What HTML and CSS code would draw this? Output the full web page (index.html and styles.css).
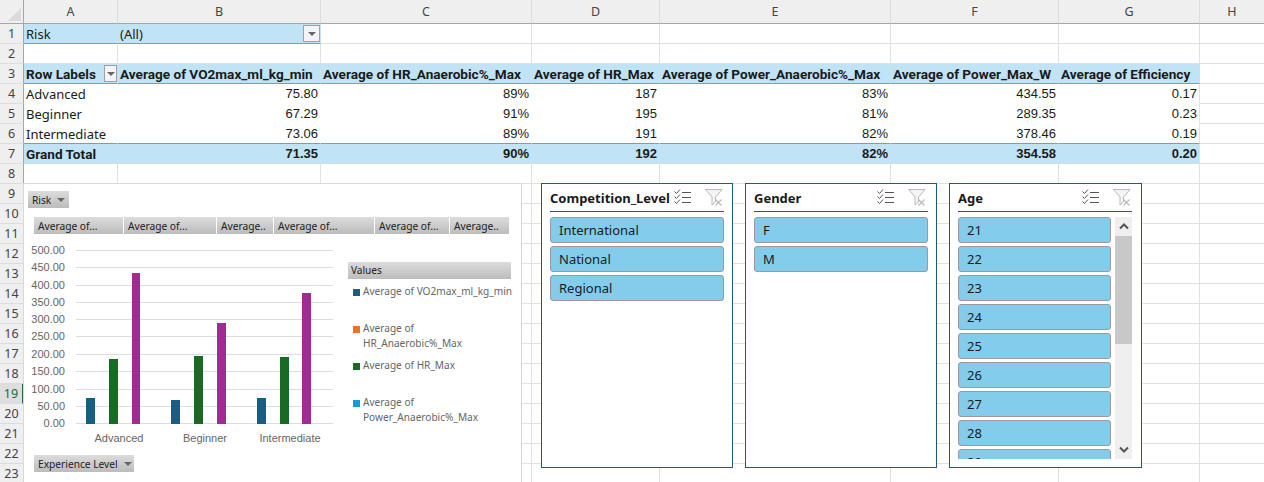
FILE: index.html
```html
<!DOCTYPE html>
<html lang="en">
<head>
    <meta charset="UTF-8">
    <meta name="viewport" content="width=device-width, initial-scale=1.0">
    <title>Pivot Dashboard</title>
    <link rel="stylesheet" href="styles.css">
</head>
<body>
    <svg class="icon-defs" width="0" height="0">
        <symbol id="icon-multi" viewBox="0 0 18 16">
            <path d="M.5 2.5l2 2 3.5-4M.5 7.5l2 2 3.5-4M.5 12.5l2 2 3.5-4" fill="none" stroke="#555" stroke-width="1"/>
            <path d="M8 3.5h9M8 8.5h9M8 13.5h9" fill="none" stroke="#555" stroke-width="1"/>
        </symbol>
        <symbol id="icon-clear" viewBox="0 0 18 17">
            <path d="M.5.5h16.5l-6.5 7.5v5l-3.5 3v-8z" fill="#f4f4f4" stroke="#b9b9b9" stroke-width="1"/>
            <path d="M10.5 10.5l6 6M16.5 10.5l-6 6" fill="none" stroke="#b9b9b9" stroke-width="1.2"/>
        </symbol>
        <symbol id="icon-drop" viewBox="0 0 8 4">
            <path d="M0 0h8l-4 4z" fill="#666"/>
        </symbol>
    </svg>

    <div class="sheet">
        <table class="grid">
            <colgroup>
                <col class="col-head"><col class="col-a"><col class="col-b"><col class="col-c"><col class="col-d"><col class="col-e"><col class="col-f"><col class="col-g"><col class="col-h">
            </colgroup>
            <thead>
                <tr class="col-labels">
                    <th class="corner"><span class="corner-mark"></span></th>
                    <th>A</th><th>B</th><th>C</th><th>D</th><th>E</th><th>F</th><th>G</th><th>H</th>
                </tr>
            </thead>
            <tbody>
                <tr class="filter-row">
                    <th>1</th>
                    <td class="band">Risk</td>
                    <td class="band filter-value">(All)<span class="drop-btn"><svg width="8" height="4"><use href="#icon-drop"/></svg></span></td>
                    <td></td><td></td><td></td><td></td><td></td><td></td>
                </tr>
                <tr><th>2</th><td></td><td></td><td></td><td></td><td></td><td></td><td></td><td></td></tr>
                <tr class="pivot-head">
                    <th>3</th>
                    <td class="band labels-cell">Row Labels<span class="drop-btn"><svg width="8" height="4"><use href="#icon-drop"/></svg></span></td>
                    <td class="band">Average of VO2max_ml_kg_min</td>
                    <td class="band">Average of HR_Anaerobic%_Max</td>
                    <td class="band">Average of HR_Max</td>
                    <td class="band">Average of Power_Anaerobic%_Max</td>
                    <td class="band">Average of Power_Max_W</td>
                    <td class="band">Average of Efficiency</td>
                    <td></td>
                </tr>
                <tr class="pivot-row">
                    <th>4</th>
                    <td>Advanced</td><td class="num">75.80</td><td class="num">89%</td><td class="num">187</td><td class="num">83%</td><td class="num">434.55</td><td class="num">0.17</td><td class="plain"></td>
                </tr>
                <tr class="pivot-row">
                    <th>5</th>
                    <td>Beginner</td><td class="num">67.29</td><td class="num">91%</td><td class="num">195</td><td class="num">81%</td><td class="num">289.35</td><td class="num">0.23</td><td class="plain"></td>
                </tr>
                <tr class="pivot-row last-row">
                    <th>6</th>
                    <td>Intermediate</td><td class="num">73.06</td><td class="num">89%</td><td class="num">191</td><td class="num">82%</td><td class="num">378.46</td><td class="num">0.19</td><td class="plain"></td>
                </tr>
                <tr class="pivot-total">
                    <th>7</th>
                    <td class="band">Grand Total</td><td class="band num">71.35</td><td class="band num">90%</td><td class="band num">192</td><td class="band num">82%</td><td class="band num">354.58</td><td class="band num">0.20</td><td></td>
                </tr>
                <tr><th>8</th><td></td><td></td><td></td><td></td><td></td><td></td><td></td><td></td></tr>
                <tr><th>9</th><td></td><td></td><td></td><td></td><td></td><td></td><td></td><td></td></tr>
                <tr><th>10</th><td></td><td></td><td></td><td></td><td></td><td></td><td></td><td></td></tr>
                <tr><th>11</th><td></td><td></td><td></td><td></td><td></td><td></td><td></td><td></td></tr>
                <tr><th>12</th><td></td><td></td><td></td><td></td><td></td><td></td><td></td><td></td></tr>
                <tr><th>13</th><td></td><td></td><td></td><td></td><td></td><td></td><td></td><td></td></tr>
                <tr><th>14</th><td></td><td></td><td></td><td></td><td></td><td></td><td></td><td></td></tr>
                <tr><th>15</th><td></td><td></td><td></td><td></td><td></td><td></td><td></td><td></td></tr>
                <tr><th>16</th><td></td><td></td><td></td><td></td><td></td><td></td><td></td><td></td></tr>
                <tr><th>17</th><td></td><td></td><td></td><td></td><td></td><td></td><td></td><td></td></tr>
                <tr><th>18</th><td></td><td></td><td></td><td></td><td></td><td></td><td></td><td></td></tr>
                <tr><th class="active-row">19</th><td></td><td></td><td></td><td></td><td></td><td></td><td></td><td></td></tr>
                <tr><th>20</th><td></td><td></td><td></td><td></td><td></td><td></td><td></td><td></td></tr>
                <tr><th>21</th><td></td><td></td><td></td><td></td><td></td><td></td><td></td><td></td></tr>
                <tr><th>22</th><td></td><td></td><td></td><td></td><td></td><td></td><td></td><td></td></tr>
                <tr><th>23</th><td></td><td></td><td></td><td></td><td></td><td></td><td></td><td></td></tr>
            </tbody>
        </table>

        <!-- pivot chart floats over the cells -->
        <div class="chart">
            <div class="chart-top">
                <span class="field-btn risk-btn">Risk<svg width="8" height="4"><use href="#icon-drop"/></svg></span>
            </div>
            <div class="value-btns">
                <span class="field-btn w-89">Average of...</span>
                <span class="field-btn w-92">Average of...</span>
                <span class="field-btn w-56">Average..</span>
                <span class="field-btn w-100">Average of...</span>
                <span class="field-btn w-74">Average of...</span>
                <span class="field-btn w-59">Average..</span>
            </div>
            <div class="chart-body">
                <svg class="plot" width="324" height="210" viewBox="0 0 324 210">
                    <g class="gridlines">
                        <path d="M52 16.5h257M52 33.5h257M52 51.5h257M52 68.5h257M52 85.5h257M52 102.5h257M52 120.5h257M52 137.5h257M52 155.5h257M52 172.5h257M52 189.5h257"/>
                    </g>
                    <g class="axis-y" text-anchor="end">
                        <text x="41" y="20">500.00</text>
                        <text x="41" y="37">450.00</text>
                        <text x="41" y="55">400.00</text>
                        <text x="41" y="72">350.00</text>
                        <text x="41" y="89">300.00</text>
                        <text x="41" y="106">250.00</text>
                        <text x="41" y="124">200.00</text>
                        <text x="41" y="141">150.00</text>
                        <text x="41" y="159">100.00</text>
                        <text x="41" y="176">50.00</text>
                        <text x="41" y="193">0.00</text>
                    </g>
                    <g class="bars-vo2">
                        <rect x="62" y="164" width="9" height="26"/>
                        <rect x="147" y="166" width="9" height="24"/>
                        <rect x="233" y="164" width="9" height="26"/>
                    </g>
                    <g class="bars-hr">
                        <rect x="85" y="125" width="9" height="65"/>
                        <rect x="170" y="122" width="9" height="68"/>
                        <rect x="256" y="123" width="9" height="67"/>
                    </g>
                    <g class="bars-power">
                        <rect x="108" y="39" width="8" height="151"/>
                        <rect x="193" y="89" width="9" height="101"/>
                        <rect x="278" y="59" width="9" height="131"/>
                    </g>
                    <g class="axis-x" text-anchor="middle">
                        <text x="95" y="208">Advanced</text>
                        <text x="181" y="208">Beginner</text>
                        <text x="266" y="208">Intermediate</text>
                    </g>
                </svg>
                <div class="legend">
                    <div class="legend-title">Values</div>
                    <div class="legend-item legend-single"><span class="swatch sw-vo2"></span><span>Average of VO2max_ml_kg_min</span></div>
                    <div class="legend-item"><span class="swatch sw-anaer"></span><span>Average of<br>HR_Anaerobic%_Max</span></div>
                    <div class="legend-item"><span class="swatch sw-hr"></span><span>Average of HR_Max</span></div>
                    <div class="legend-item"><span class="swatch sw-pow"></span><span>Average of<br>Power_Anaerobic%_Max</span></div>
                </div>
            </div>
            <div class="chart-bottom">
                <span class="field-btn level-btn">Experience Level<svg width="8" height="4"><use href="#icon-drop"/></svg></span>
            </div>
        </div>

        <div class="slicer slicer-comp">
            <div class="slicer-head">
                <span class="slicer-title">Competition_Level</span>
                <div class="slicer-tools">
                    <svg width="18" height="16"><use href="#icon-multi"/></svg>
                    <svg width="18" height="17"><use href="#icon-clear"/></svg>
                </div>
            </div>
            <div class="slicer-items">
                <div class="slicer-item">International</div>
                <div class="slicer-item">National</div>
                <div class="slicer-item">Regional</div>
            </div>
        </div>

        <div class="slicer slicer-gender">
            <div class="slicer-head">
                <span class="slicer-title">Gender</span>
                <div class="slicer-tools">
                    <svg width="18" height="16"><use href="#icon-multi"/></svg>
                    <svg width="18" height="17"><use href="#icon-clear"/></svg>
                </div>
            </div>
            <div class="slicer-items">
                <div class="slicer-item">F</div>
                <div class="slicer-item">M</div>
            </div>
        </div>

        <div class="slicer slicer-age">
            <div class="slicer-head">
                <span class="slicer-title">Age</span>
                <div class="slicer-tools">
                    <svg width="18" height="16"><use href="#icon-multi"/></svg>
                    <svg width="18" height="17"><use href="#icon-clear"/></svg>
                </div>
            </div>
            <div class="slicer-scroll">
                <div class="slicer-items">
                    <div class="slicer-item">21</div>
                    <div class="slicer-item">22</div>
                    <div class="slicer-item">23</div>
                    <div class="slicer-item">24</div>
                    <div class="slicer-item">25</div>
                    <div class="slicer-item">26</div>
                    <div class="slicer-item">27</div>
                    <div class="slicer-item">28</div>
                    <div class="slicer-item">29</div>
                </div>
                <div class="scrollbar">
                    <svg class="chev" width="10" height="7" viewBox="0 0 10 7"><path d="M1 5.5l4-4 4 4" fill="none" stroke="#555" stroke-width="2"/></svg>
                    <div class="scroll-thumb"></div>
                    <svg class="chev chev-down" width="10" height="7" viewBox="0 0 10 7"><path d="M1 1.5l4 4 4-4" fill="none" stroke="#555" stroke-width="2"/></svg>
                </div>
            </div>
        </div>
    </div>
</body>
</html>
```

FILE: styles.css
```css
html, body {
    margin: 0;
    padding: 0;
    height: 100%;
    overflow: hidden;
    background-color: white;
}

body {
    font-family: "Noto Sans", Arial, sans-serif;
    font-size: 13px;
    color: #1a1a1a;
}

.icon-defs {
    position: absolute;
}

.sheet {
    position: relative;
    width: 1264px;
    height: 482px;
    overflow: hidden;
}

/* cell grid */
.grid {
    table-layout: fixed;
    width: 1264px;
    border-collapse: separate;
    border-spacing: 0;
}

.col-head { width: 24px; }
.col-a { width: 94px; }
.col-b { width: 203px; }
.col-c { width: 211px; }
.col-d { width: 128px; }
.col-e { width: 231px; }
.col-f { width: 168px; }
.col-g { width: 141px; }
.col-h { width: 65px; }

.grid th, .grid td {
    box-sizing: border-box;
    height: 20px;
    padding: 0 2px;
    border-right: 1px solid #e1e1e1;
    border-bottom: 1px solid #e1e1e1;
    white-space: nowrap;
    overflow: hidden;
    font-weight: normal;
    text-align: left;
}

.grid tbody th {
    padding: 0;
    background-color: #efefef;
    border-right: 1px solid #a6a6a6;
    border-bottom-color: #dcdcdc;
    text-align: center;
    font-size: 12.5px;
    color: #444;
}

.grid tbody th.active-row {
    background-color: #dedede;
    border-right: 2px solid #1a6b3c;
    color: #1a6b3c;
}

.col-labels th {
    height: 24px;
    padding: 0;
    background-color: #efefef;
    border-right-color: #dcdcdc;
    border-bottom: 1px solid #a6a6a6;
    text-align: center;
    font-size: 12.5px;
    color: #444;
}

.col-labels th.corner {
    position: relative;
    border-right-color: #a6a6a6;
}

.corner-mark {
    position: absolute;
    right: 2px;
    bottom: 2px;
    width: 0;
    height: 0;
    border-left: 13px solid transparent;
    border-bottom: 13px solid #dadada;
}

/* pivot table */
.grid td.band {
    position: relative;
    background-color: #c0e4f5;
    border-right-color: #c0e4f5;
    border-bottom-color: #c0e4f5;
}

.filter-row td.band {
    border-bottom-color: #5aa9d0;
}

.pivot-head td.band {
    font-family: Roboto, Arial, sans-serif;
    font-size: 13.6px;
    font-weight: bold;
    border-bottom-color: #5aa9d0;
}

.pivot-total td.band {
    font-family: Roboto, Arial, sans-serif;
    font-size: 13.6px;
    font-weight: bold;
    border-bottom-color: #c0e4f5;
}

.pivot-total td.band:nth-child(8) {
    border-right-color: #e1e1e1;
}

.pivot-row td {
    border-right-color: transparent;
    border-bottom-color: transparent;
}

.pivot-row td.plain {
    border-bottom-color: #e1e1e1;
}

.pivot-row td:nth-child(8) {
    border-right-color: #e1e1e1;
}

.last-row td {
    border-bottom-color: #5aa9d0;
}

.last-row td.plain {
    border-bottom-color: #e1e1e1;
}

.grid td.num {
    font-family: "Liberation Sans", Arial, sans-serif;
    font-size: 13px;
    text-align: right;
}

.drop-btn {
    position: absolute;
    top: 1px;
    right: 0;
    box-sizing: border-box;
    display: flex;
    align-items: center;
    justify-content: center;
    width: 17px;
    height: 17px;
    border: 1px solid #a0a0a0;
    background-color: #f4f4f8;
}

.labels-cell .drop-btn {
    width: 13px;
}

/* chart */
.chart {
    position: absolute;
    left: 23px;
    top: 183px;
    box-sizing: border-box;
    width: 499px;
    height: 300px;
    background-color: white;
    border: 1px solid #d9d9d9;
}

.field-btn {
    box-sizing: border-box;
    display: inline-flex;
    align-items: center;
    gap: 6px;
    height: 17px;
    padding-left: 4px;
    background: linear-gradient(#dcdcdc, #bcbcbc);
    font-size: 10.2px;
    color: #222;
    white-space: nowrap;
    overflow: hidden;
}

.chart-top {
    display: flex;
    padding: 7px 0 0 4px;
}

.risk-btn {
    width: 41px;
}

.value-btns {
    display: flex;
    gap: 1px;
    margin: 9px 0 0 10px;
}

.w-89 { width: 89px; }
.w-92 { width: 92px; }
.w-56 { width: 56px; }
.w-100 { width: 100px; }
.w-74 { width: 74px; }
.w-59 { width: 59px; }

.chart-body {
    display: flex;
    height: 221px;
}

.plot {
    flex: none;
}

.plot text {
    font-family: "Liberation Sans", Arial, sans-serif;
    font-size: 11px;
    fill: #666;
}

.gridlines path {
    fill: none;
    stroke: #dcdcdc;
    stroke-width: 1;
}

.bars-vo2 rect { fill: #156082; }
.bars-hr rect { fill: #196b24; }
.bars-power rect { fill: #a02b93; }

.legend {
    margin: 28px 0 0 0;
    width: 163px;
    font-size: 10.1px;
    color: #666;
}

.legend-title {
    height: 17px;
    padding-left: 3px;
    background: linear-gradient(#dcdcdc, #bcbcbc);
    line-height: 17px;
    color: #222;
}

.legend-item {
    display: flex;
    gap: 3px;
    height: 37px;
    padding: 4px 0 0 5px;
    box-sizing: border-box;
    line-height: 15px;
}

.legend-single {
    margin-top: 1px;
    white-space: nowrap;
}

.swatch {
    flex: none;
    width: 7px;
    height: 7px;
    margin-top: 5px;
}

.sw-vo2 { background-color: #156082; }
.sw-anaer { background-color: #e97132; }
.sw-hr { background-color: #196b24; }
.sw-pow { background-color: #0f9ed5; }

.chart-bottom {
    display: flex;
    padding-left: 10px;
}

.level-btn {
    width: 100px;
}

/* slicers */
.slicer {
    position: absolute;
    top: 183px;
    box-sizing: border-box;
    width: 192px;
    height: 285px;
    padding: 0 8px;
    background-color: white;
    border: 1px solid #156082;
}

.slicer-comp { left: 541px; }
.slicer-gender { left: 745px; }
.slicer-age { left: 949px; width: 193px; padding-right: 9px; }

.slicer-head {
    display: flex;
    align-items: center;
    justify-content: space-between;
    height: 28px;
    box-sizing: border-box;
    border-bottom: 1px solid #156082;
}

.slicer-title {
    font-weight: bold;
    font-size: 13px;
    color: #1a1a1a;
}

.slicer-tools {
    display: flex;
    gap: 13px;
    margin-right: 1px;
}

.slicer-gender .slicer-tools {
    margin-right: 2px;
}

.slicer-items {
    display: flex;
    flex-direction: column;
    flex: 1;
    gap: 3px;
    padding-top: 5px;
}

.slicer-item {
    box-sizing: border-box;
    flex: none;
    height: 26px;
    padding-left: 8px;
    background-color: #83ccec;
    border: 1px solid #9a9a9a;
    border-radius: 3px;
    line-height: 24px;
    font-size: 13px;
}

.slicer-scroll {
    display: flex;
    gap: 4px;
    height: 247px;
    overflow: hidden;
}

.scrollbar {
    flex: none;
    display: flex;
    flex-direction: column;
    align-items: center;
    width: 17px;
    height: 242px;
    margin-top: 5px;
    background-color: #efefef;
}

.chev {
    flex: none;
    margin: 6px 0;
}

.scroll-thumb {
    align-self: stretch;
    height: 108px;
    background-color: #c8c8c8;
}

.chev-down {
    margin-top: auto;
}
```
